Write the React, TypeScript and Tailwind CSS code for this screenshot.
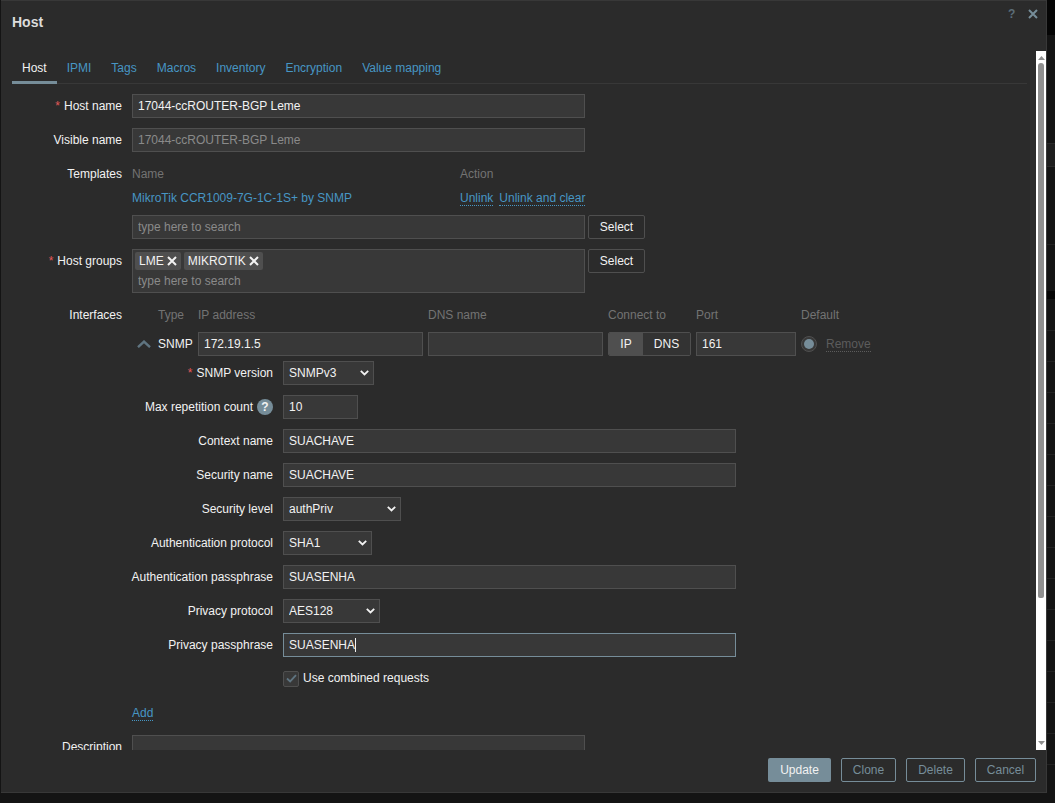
import React from "react";

const lineRows = Array.from({ length: 15 }, (_, i) => i);

function Label({ children, required }: { children: React.ReactNode; required?: boolean }) {
  return (
    <span>
      {required && <span className="text-[#e45959] mr-[4px]">*</span>}
      {children}
    </span>
  );
}

function Field({ value, className, muted }: { value: string; className: string; muted?: boolean }) {
  return (
    <input
      readOnly
      value={value}
      className={`h-[24px] border border-[#4f4f4f] bg-[#383838] px-[5px] outline-none ${muted ? "text-[#8a8a8a]" : "text-[#f2f2f2]"} ${className}`}
    />
  );
}

function MainRow({ label, required, children, leading = "leading-[24px]", className = "mb-[10px]" }: { label: string; required?: boolean; children: React.ReactNode; leading?: string; className?: string }) {
  return (
    <div className={`flex gap-[10px] ${className}`}>
      <div className={`w-[110px] shrink-0 whitespace-nowrap text-right text-[#f2f2f2] ${leading}`}>
        <Label required={required}>{label}</Label>
      </div>
      {children}
    </div>
  );
}

function SubRow({ label, required, children }: { label: React.ReactNode; required?: boolean; children: React.ReactNode }) {
  return (
    <div className="mb-[10px] flex h-[24px] gap-[10px]">
      <div className="flex w-[141px] shrink-0 items-center justify-end whitespace-nowrap leading-[24px] text-[#f2f2f2]">
        <Label required={required}>{label}</Label>
      </div>
      {children}
    </div>
  );
}

function Dropdown({ value, className }: { value: string; className: string }) {
  return (
    <div className={`relative h-[24px] ${className}`}>
      <select
        defaultValue={value}
        className="h-full w-full appearance-none border border-[#4f4f4f] bg-[#383838] pl-[5px] text-[#f2f2f2] outline-none"
      >
        <option>{value}</option>
      </select>
      <svg viewBox="0 0 9 6" className="pointer-events-none absolute right-[5px] top-[9px] h-[6px] w-[9px]" fill="none" stroke="#f2f2f2" strokeWidth="1.8">
        <path d="M0.8 0.8 L4.5 4.5 L8.2 0.8" />
      </svg>
    </div>
  );
}

function Cross({ className, color, width }: { className: string; color: string; width: number }) {
  return (
    <svg viewBox="0 0 10 10" className={className} fill="none" stroke={color} strokeWidth={width}>
      <path d="M1 1 L9 9 M9 1 L1 9" />
    </svg>
  );
}

function Tag({ text }: { text: string }) {
  return (
    <span className="flex h-[18px] items-center gap-[3px] rounded-[2px] bg-[#4f4f4f] pl-[4px] pr-[4px] text-[#f2f2f2]">
      {text}
      <Cross className="h-[10px] w-[10px]" color="#f2f2f2" width={2} />
    </span>
  );
}

function DottedLink({ children, muted }: { children: React.ReactNode; muted?: boolean }) {
  return (
    <a className={`whitespace-nowrap border-b border-dotted leading-[14px] ${muted ? "border-[#5c5c5c] text-[#5c5c5c]" : "border-[#4796c4] text-[#4796c4]"}`}>
      {children}
    </a>
  );
}

function OutlineButton({ children, className }: { children: React.ReactNode; className: string }) {
  return (
    <button className={`h-[24px] rounded-[2px] border border-[#768d99] text-[#768d99] ${className}`}>{children}</button>
  );
}

function SelectButton() {
  return (
    <button className="ml-[3px] h-[24px] w-[57px] rounded-[2px] border border-[#4f4f4f] bg-[#2b2b2b] text-[#f2f2f2]">Select</button>
  );
}

export default function App() {
  const tabs = ["IPMI", "Tags", "Macros", "Inventory", "Encryption", "Value mapping"];
  return (
    <div className="flex h-[803px] w-[1055px] overflow-hidden bg-[#141414] font-['Liberation_Sans',Arial,sans-serif] text-[12px]">
      <div className="w-px shrink-0" />
      <div className="flex h-[793px] w-[1046px] shrink-0 flex-col border-b border-r border-t border-[#383838] bg-[#2b2b2b]">
        {/* header */}
        <div className="relative h-[50px] shrink-0">
          <h1 className="pl-[11px] pt-[13px] text-[14px] font-bold leading-[16px] text-[#dcdcdc]">Host</h1>
          <span className="absolute left-[1007px] top-[6px] text-[12px] font-bold leading-[14px] text-[#5b6d78]">?</span>
          <Cross className="absolute left-[1027px] top-[8px] h-[10px] w-[10px]" color="#768d99" width={2} />
        </div>

        {/* body */}
        <div className="flex h-[699px] shrink-0">
          <div className="min-w-0 flex-1 overflow-hidden pl-[11px] pr-[9px]">
            <div className="mb-[10px] flex h-[33px] border-b border-[#383838]">
              <div className="-mb-px h-[33px] border-b-[3px] border-[#768d99] px-[10px] pt-[10px] leading-[14px] text-[#f2f2f2]">Host</div>
              {tabs.map((t) => (
                <div key={t} className="px-[10px] pt-[10px] leading-[14px] text-[#4796c4]">{t}</div>
              ))}
            </div>

            <MainRow label="Host name" required>
              <Field value="17044-ccROUTER-BGP Leme" className="w-[453px]" />
            </MainRow>
            <MainRow label="Visible name">
              <Field value="17044-ccROUTER-BGP Leme" className="w-[453px]" muted />
            </MainRow>

            <MainRow label="Templates" leading="leading-[24px]">
              <div className="w-[453px]">
                <div className="flex h-[23px] items-center pt-[1px] text-[#737373]">
                  <span className="w-[328px]">Name</span>
                  <span>Action</span>
                </div>
                <div className="flex h-[25px] items-center text-[#4796c4]">
                  <span className="w-[328px] shrink-0 whitespace-nowrap">MikroTik CCR1009-7G-1C-1S+ by SNMP</span>
                  <span className="mt-[1px] flex gap-[6px]">
                    <DottedLink>Unlink</DottedLink>
                    <DottedLink>Unlink and clear</DottedLink>
                  </span>
                </div>
                <div className="mt-[5px] flex">
                  <input readOnly placeholder="type here to search" className="h-[24px] w-[453px] shrink-0 border border-[#4f4f4f] bg-[#383838] px-[5px] outline-none placeholder:text-[#8a8a8a]" />
                  <div className="shrink-0"><SelectButton /></div>
                </div>
              </div>
            </MainRow>

            <MainRow label="Host groups" required>
              <div className="h-[44px] w-[453px] shrink-0 border border-[#4f4f4f] bg-[#383838] pl-[2px] pt-[2px]">
                <div className="flex gap-[3px]">
                  <Tag text="LME" />
                  <Tag text="MIKROTIK" />
                </div>
                <input readOnly placeholder="type here to search" className="mt-[2px] block h-[18px] w-[300px] bg-transparent pl-[3px] outline-none placeholder:text-[#8a8a8a]" />
              </div>
              <div className="-ml-[10px] shrink-0"><SelectButton /></div>
            </MainRow>

            <div className="flex gap-[10px]">
              <div className="w-[110px] shrink-0 text-right leading-[24px] text-[#f2f2f2]">Interfaces</div>
              <div className="min-w-0 flex-1">
                <div className="grid grid-cols-[61px_225px_175px_83px_100px_auto] gap-x-[5px]">
                  <div className="h-[24px] pl-[26px] leading-[24px] text-[#737373]">Type</div>
                  <div className="leading-[24px] text-[#737373]">IP address</div>
                  <div className="leading-[24px] text-[#737373]">DNS name</div>
                  <div className="leading-[24px] text-[#737373]">Connect to</div>
                  <div className="leading-[24px] text-[#737373]">Port</div>
                  <div className="leading-[24px] text-[#737373]">Default</div>

                  <div className="mt-[5px] flex h-[24px] items-center text-[#f2f2f2]">
                    <svg viewBox="0 0 14 8" className="ml-[5px] mr-[7px] h-[8px] w-[14px]" fill="none" stroke="#5f7480" strokeWidth="2.4">
                      <path d="M1 7.2 L7 1.6 L13 7.2" />
                    </svg>
                    SNMP
                  </div>
                  <Field value="172.19.1.5" className="mt-[5px] w-[225px]" />
                  <Field value="" className="mt-[5px] w-[175px]" />
                  <div className="mt-[5px] flex h-[24px] overflow-hidden rounded-[2px] border border-[#4f4f4f] text-[#f2f2f2]">
                    <span className="flex w-[34px] items-center justify-center bg-[#4f4f4f]">IP</span>
                    <span className="flex flex-1 items-center justify-center bg-[#333333]">DNS</span>
                  </div>
                  <Field value="161" className="mt-[5px] w-[100px]" />
                  <div className="mt-[5px] flex h-[24px] items-center gap-[9px]">
                    <span className="flex h-[16px] w-[16px] items-center justify-center rounded-full border border-[#4f4f4f] bg-[#383838]">
                      <span className="h-[10px] w-[10px] rounded-full bg-[#768d99]" />
                    </span>
                    <DottedLink muted>Remove</DottedLink>
                  </div>
                </div>

                <div className="mt-[5px]">
                  <SubRow label="SNMP version" required>
                    <Dropdown value="SNMPv3" className="w-[91px]" />
                  </SubRow>
                  <SubRow
                    label={
                      <span className="flex items-center gap-[4px]">
                        Max repetition count
                        <span className="flex h-[16px] w-[16px] items-center justify-center rounded-full bg-[#768d99] text-[12px] font-bold text-[#f2f2f2]">?</span>
                      </span>
                    }
                  >
                    <Field value="10" className="w-[75px]" />
                  </SubRow>
                  <SubRow label="Context name">
                    <Field value="SUACHAVE" className="w-[453px]" />
                  </SubRow>
                  <SubRow label="Security name">
                    <Field value="SUACHAVE" className="w-[453px]" />
                  </SubRow>
                  <SubRow label="Security level">
                    <Dropdown value="authPriv" className="w-[118px]" />
                  </SubRow>
                  <SubRow label="Authentication protocol">
                    <Dropdown value="SHA1" className="w-[89px]" />
                  </SubRow>
                  <SubRow label="Authentication passphrase">
                    <Field value="SUASENHA" className="w-[453px]" />
                  </SubRow>
                  <SubRow label="Privacy protocol">
                    <Dropdown value="AES128" className="w-[97px]" />
                  </SubRow>
                  <SubRow label="Privacy passphrase">
                    <div className="relative h-[24px] w-[453px] border border-[#768d99] bg-[#383838] px-[5px] leading-[22px] text-[#f2f2f2]">
                      SUASENHA
                      <span className="absolute left-[71px] top-[4px] h-[14px] w-px bg-[#f2f2f2]" />
                    </div>
                  </SubRow>
                  <div className="flex h-[22px] items-center gap-[4px] pl-[151px] text-[#f2f2f2]">
                    <span className="mt-[1px] flex h-[16px] w-[16px] items-center justify-center rounded-[2px] border border-[#4f4f4f] bg-[#383838]">
                      <svg viewBox="0 0 12 10" className="h-[9px] w-[11px]" fill="none" stroke="#5f7480" strokeWidth="2">
                        <path d="M1 5 L4.5 8.2 L11 1.2" />
                      </svg>
                    </span>
                    Use combined requests
                  </div>
                  <div className="mt-[17px] flex h-[15px]">
                    <DottedLink>Add</DottedLink>
                  </div>
                </div>
              </div>
            </div>

            <MainRow label="Description" className="mt-[14px]">
              <div className="h-[100px] w-[453px] border border-[#4f4f4f] bg-[#383838]" />
            </MainRow>
          </div>

          {/* scrollbar */}
          <div className="flex h-[699px] w-[10px] shrink-0 flex-col items-center bg-white">
            <svg viewBox="0 0 7 4" className="mt-[5px] h-[4px] w-[7px]" fill="#8f8f8f"><path d="M3.5 0 L7 4 L0 4 Z" /></svg>
            <div className="mt-[3px] h-[535px] w-[6px] rounded-t-[3px] rounded-b-[2px] bg-[#8f8f8f]" />
            <svg viewBox="0 0 7 4" className="mt-auto mb-[5px] h-[4px] w-[7px]" fill="#8f8f8f"><path d="M0 0 L7 0 L3.5 4 Z" /></svg>
          </div>
        </div>

        {/* footer */}
        <div className="flex flex-1 justify-end gap-[10px] pr-[10px] pt-[8px]">
          <button className="h-[24px] w-[63px] rounded-[2px] bg-[#768d99] font-normal text-[#f2f2f2]">Update</button>
          <OutlineButton className="w-[55px]">Clone</OutlineButton>
          <OutlineButton className="w-[59px]">Delete</OutlineButton>
          <OutlineButton className="w-[61px]">Cancel</OutlineButton>
        </div>
      </div>

      {/* page behind the dialog */}
      <div className="flex w-[8px] shrink-0 flex-col">
        <div className="h-[35px] shrink-0 bg-[#050505]" />
        <div className="h-[108px] shrink-0" />
        <div className="h-[24px] shrink-0 border-y border-[#2a2a2a] bg-[#1e1e1e]" />
        <div className="h-[78px] shrink-0 border-b border-[#222222]" />
        <div className="h-[46px] shrink-0" />
        <div className="h-[8px] shrink-0 bg-[#050505]" />
        <div className="h-[31px] shrink-0" />
        {lineRows.map((i) => (
          <div key={i} className="h-[31px] shrink-0 border-t border-[#222222]" />
        ))}
      </div>
    </div>
  );
}
